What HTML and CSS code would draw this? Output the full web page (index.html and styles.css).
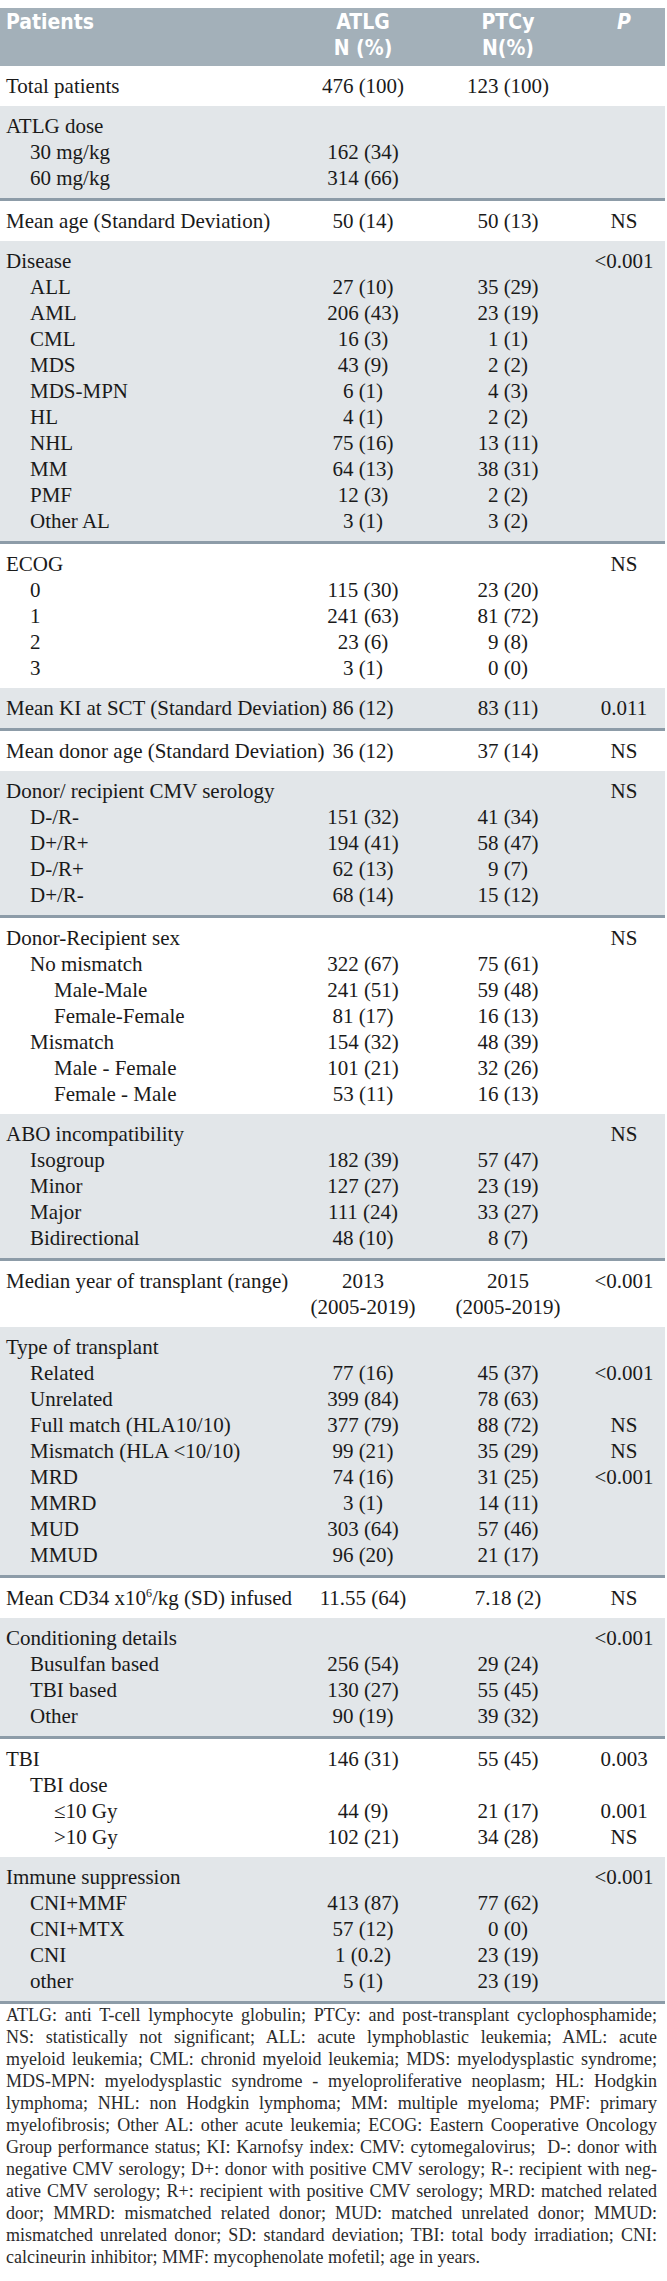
FILE: index.html
```html
<!DOCTYPE html>
<html lang="en">
<head>
<meta charset="utf-8">
<title>Patient characteristics</title>
<link rel="stylesheet" href="styles.css">
</head>
<body>
<div class="page">
<table class="t">
<colgroup><col class="c-label"><col class="c-atlg"><col class="c-ptcy"><col class="c-p"></colgroup>
<thead>
<tr><th class="lab">Patients</th><th>ATLG<br>N (%)</th><th>PTCy<br>N(%)</th><th><i>P</i></th></tr>
</thead>
<tbody class="grp">
<tr><td class="lab">Total patients</td><td>476 (100)</td><td>123 (100)</td><td></td></tr>
</tbody>
<tbody class="grp gray">
<tr><td class="lab">ATLG dose</td><td></td><td></td><td></td></tr>
<tr><td class="lab i1">30 mg/kg</td><td>162 (34)</td><td></td><td></td></tr>
<tr><td class="lab i1">60 mg/kg</td><td>314 (66)</td><td></td><td></td></tr>
</tbody>
<tbody class="grp">
<tr><td class="lab">Mean age (Standard Deviation)</td><td>50 (14)</td><td>50 (13)</td><td>NS</td></tr>
</tbody>
<tbody class="grp gray">
<tr><td class="lab">Disease</td><td></td><td></td><td>&lt;0.001</td></tr>
<tr><td class="lab i1">ALL</td><td>27 (10)</td><td>35 (29)</td><td></td></tr>
<tr><td class="lab i1">AML</td><td>206 (43)</td><td>23 (19)</td><td></td></tr>
<tr><td class="lab i1">CML</td><td>16 (3)</td><td>1 (1)</td><td></td></tr>
<tr><td class="lab i1">MDS</td><td>43 (9)</td><td>2 (2)</td><td></td></tr>
<tr><td class="lab i1">MDS-MPN</td><td>6 (1)</td><td>4 (3)</td><td></td></tr>
<tr><td class="lab i1">HL</td><td>4 (1)</td><td>2 (2)</td><td></td></tr>
<tr><td class="lab i1">NHL</td><td>75 (16)</td><td>13 (11)</td><td></td></tr>
<tr><td class="lab i1">MM</td><td>64 (13)</td><td>38 (31)</td><td></td></tr>
<tr><td class="lab i1">PMF</td><td>12 (3)</td><td>2 (2)</td><td></td></tr>
<tr><td class="lab i1">Other AL</td><td>3 (1)</td><td>3 (2)</td><td></td></tr>
</tbody>
<tbody class="grp">
<tr><td class="lab">ECOG</td><td></td><td></td><td>NS</td></tr>
<tr><td class="lab i1">0</td><td>115 (30)</td><td>23 (20)</td><td></td></tr>
<tr><td class="lab i1">1</td><td>241 (63)</td><td>81 (72)</td><td></td></tr>
<tr><td class="lab i1">2</td><td>23 (6)</td><td>9 (8)</td><td></td></tr>
<tr><td class="lab i1">3</td><td>3 (1)</td><td>0 (0)</td><td></td></tr>
</tbody>
<tbody class="grp gray">
<tr><td class="lab">Mean KI at SCT (Standard Deviation)</td><td>86 (12)</td><td>83 (11)</td><td>0.011</td></tr>
</tbody>
<tbody class="grp">
<tr><td class="lab">Mean donor age (Standard Deviation)</td><td>36 (12)</td><td>37 (14)</td><td>NS</td></tr>
</tbody>
<tbody class="grp gray">
<tr><td class="lab">Donor/ recipient CMV serology</td><td></td><td></td><td>NS</td></tr>
<tr><td class="lab i1">D-/R-</td><td>151 (32)</td><td>41 (34)</td><td></td></tr>
<tr><td class="lab i1">D+/R+</td><td>194 (41)</td><td>58 (47)</td><td></td></tr>
<tr><td class="lab i1">D-/R+</td><td>62 (13)</td><td>9 (7)</td><td></td></tr>
<tr><td class="lab i1">D+/R-</td><td>68 (14)</td><td>15 (12)</td><td></td></tr>
</tbody>
<tbody class="grp">
<tr><td class="lab">Donor-Recipient sex</td><td></td><td></td><td>NS</td></tr>
<tr><td class="lab i1">No mismatch</td><td>322 (67)</td><td>75 (61)</td><td></td></tr>
<tr><td class="lab i2">Male-Male</td><td>241 (51)</td><td>59 (48)</td><td></td></tr>
<tr><td class="lab i2">Female-Female</td><td>81 (17)</td><td>16 (13)</td><td></td></tr>
<tr><td class="lab i1">Mismatch</td><td>154 (32)</td><td>48 (39)</td><td></td></tr>
<tr><td class="lab i2">Male - Female</td><td>101 (21)</td><td>32 (26)</td><td></td></tr>
<tr><td class="lab i2">Female - Male</td><td>53 (11)</td><td>16 (13)</td><td></td></tr>
</tbody>
<tbody class="grp gray">
<tr><td class="lab">ABO incompatibility</td><td></td><td></td><td>NS</td></tr>
<tr><td class="lab i1">Isogroup</td><td>182 (39)</td><td>57 (47)</td><td></td></tr>
<tr><td class="lab i1">Minor</td><td>127 (27)</td><td>23 (19)</td><td></td></tr>
<tr><td class="lab i1">Major</td><td>111 (24)</td><td>33 (27)</td><td></td></tr>
<tr><td class="lab i1">Bidirectional</td><td>48 (10)</td><td>8 (7)</td><td></td></tr>
</tbody>
<tbody class="grp">
<tr><td class="lab">Median year of transplant (range)</td><td>2013</td><td>2015</td><td>&lt;0.001</td></tr>
<tr><td class="lab"></td><td>(2005-2019)</td><td>(2005-2019)</td><td></td></tr>
</tbody>
<tbody class="grp gray">
<tr><td class="lab">Type of transplant</td><td></td><td></td><td></td></tr>
<tr><td class="lab i1">Related</td><td>77 (16)</td><td>45 (37)</td><td>&lt;0.001</td></tr>
<tr><td class="lab i1">Unrelated</td><td>399 (84)</td><td>78 (63)</td><td></td></tr>
<tr><td class="lab i1">Full match (HLA10/10)</td><td>377 (79)</td><td>88 (72)</td><td>NS</td></tr>
<tr><td class="lab i1">Mismatch (HLA &lt;10/10)</td><td>99 (21)</td><td>35 (29)</td><td>NS</td></tr>
<tr><td class="lab i1">MRD</td><td>74 (16)</td><td>31 (25)</td><td>&lt;0.001</td></tr>
<tr><td class="lab i1">MMRD</td><td>3 (1)</td><td>14 (11)</td><td></td></tr>
<tr><td class="lab i1">MUD</td><td>303 (64)</td><td>57 (46)</td><td></td></tr>
<tr><td class="lab i1">MMUD</td><td>96 (20)</td><td>21 (17)</td><td></td></tr>
</tbody>
<tbody class="grp">
<tr><td class="lab">Mean CD34 x10<sup>6</sup>/kg (SD) infused</td><td>11.55 (64)</td><td>7.18 (2)</td><td>NS</td></tr>
</tbody>
<tbody class="grp gray">
<tr><td class="lab">Conditioning details</td><td></td><td></td><td>&lt;0.001</td></tr>
<tr><td class="lab i1">Busulfan based</td><td>256 (54)</td><td>29 (24)</td><td></td></tr>
<tr><td class="lab i1">TBI based</td><td>130 (27)</td><td>55 (45)</td><td></td></tr>
<tr><td class="lab i1">Other</td><td>90 (19)</td><td>39 (32)</td><td></td></tr>
</tbody>
<tbody class="grp">
<tr><td class="lab">TBI</td><td>146 (31)</td><td>55 (45)</td><td>0.003</td></tr>
<tr><td class="lab i1">TBI dose</td><td></td><td></td><td></td></tr>
<tr><td class="lab i2">≤10 Gy</td><td>44 (9)</td><td>21 (17)</td><td>0.001</td></tr>
<tr><td class="lab i2">&gt;10 Gy</td><td>102 (21)</td><td>34 (28)</td><td>NS</td></tr>
</tbody>
<tbody class="grp gray">
<tr><td class="lab">Immune suppression</td><td></td><td></td><td>&lt;0.001</td></tr>
<tr><td class="lab i1">CNI+MMF</td><td>413 (87)</td><td>77 (62)</td><td></td></tr>
<tr><td class="lab i1">CNI+MTX</td><td>57 (12)</td><td>0 (0)</td><td></td></tr>
<tr><td class="lab i1">CNI</td><td>1 (0.2)</td><td>23 (19)</td><td></td></tr>
<tr><td class="lab i1">other</td><td>5 (1)</td><td>23 (19)</td><td></td></tr>
</tbody>
</table>
<div class="note">
<span class="ln">ATLG: anti T-cell lymphocyte globulin; PTCy: and post-transplant cyclophosphamide;</span>
<span class="ln">NS: statistically not significant; ALL: acute lymphoblastic leukemia; AML: acute</span>
<span class="ln">myeloid leukemia; CML: chronid myeloid leukemia; MDS: myelodysplastic syndrome;</span>
<span class="ln">MDS-MPN: myelodysplastic syndrome - myeloproliferative neoplasm; HL: Hodgkin</span>
<span class="ln">lymphoma; NHL: non Hodgkin lymphoma; MM: multiple myeloma; PMF: primary</span>
<span class="ln">myelofibrosis; Other AL: other acute leukemia; ECOG: Eastern Cooperative Oncology</span>
<span class="ln">Group performance status; KI: Karnofsy index: CMV: cytomegalovirus;&nbsp; D-: donor with</span>
<span class="ln">negative CMV serology; D+: donor with positive CMV serology; R-: recipient with neg-</span>
<span class="ln">ative CMV serology; R+: recipient with positive CMV serology; MRD: matched related</span>
<span class="ln">door; MMRD: mismatched related donor; MUD: matched unrelated donor; MMUD:</span>
<span class="ln">mismatched unrelated donor; SD: standard deviation; TBI: total body irradiation; CNI:</span>
<span class="ln last">calcineurin inhibitor; MMF: mycophenolate mofetil; age in years.</span>
</div>
</div>
</body>
</html>
```

FILE: styles.css
```css
html, body {
  margin: 0;
  padding: 0;
  background: #ffffff;
}

.page {
  width: 665px;
  padding-top: 8px;
}

.t {
  width: 665px;
  border-collapse: collapse;
  table-layout: fixed;
  font-family: "Liberation Serif", "Times New Roman", serif;
  font-size: 21px;
  line-height: 26px;
  color: #1a1a1a;
}

.c-label { width: 300px; }
.c-atlg { width: 126px; }
.c-ptcy { width: 164px; }
.c-p { width: 75px; }

.t th {
  background: #a3b0b9;
  color: #ffffff;
  font-family: "Liberation Sans Narrow", "DejaVu Sans Condensed", "Liberation Sans", sans-serif;
  font-weight: bold;
  font-size: 21px;
  line-height: 26px;
  text-align: center;
  vertical-align: top;
  padding: 1px 0 5px;
}

.t th:last-child,
.t td:last-child {
  padding-right: 7px;
}

.t td {
  padding: 0;
  text-align: center;
  white-space: nowrap;
  vertical-align: top;
}

.t .lab {
  text-align: left;
  padding-left: 6px;
}

.t .i1 { padding-left: 30px; }
.t .i2 { padding-left: 54px; }

.grp tr:first-child td { padding-top: 7px; }
.grp tr:last-child td { padding-bottom: 7px; }

.gray td { background: #e2e6e9; }
.gray { border-bottom: 3px solid #8d9ca8; }

.t sup {
  font-size: 12px;
  line-height: 0;
  vertical-align: 8px;
}

.note {
  font-family: "Liberation Serif", "Times New Roman", serif;
  font-size: 18px;
  line-height: 22px;
  color: #2b2b2b;
  padding: 0 8px 0 6px;
}

.note .ln {
  display: block;
  white-space: nowrap;
  text-align: justify;
  text-align-last: justify;
}

.note .ln.last {
  text-align-last: left;
}
```
